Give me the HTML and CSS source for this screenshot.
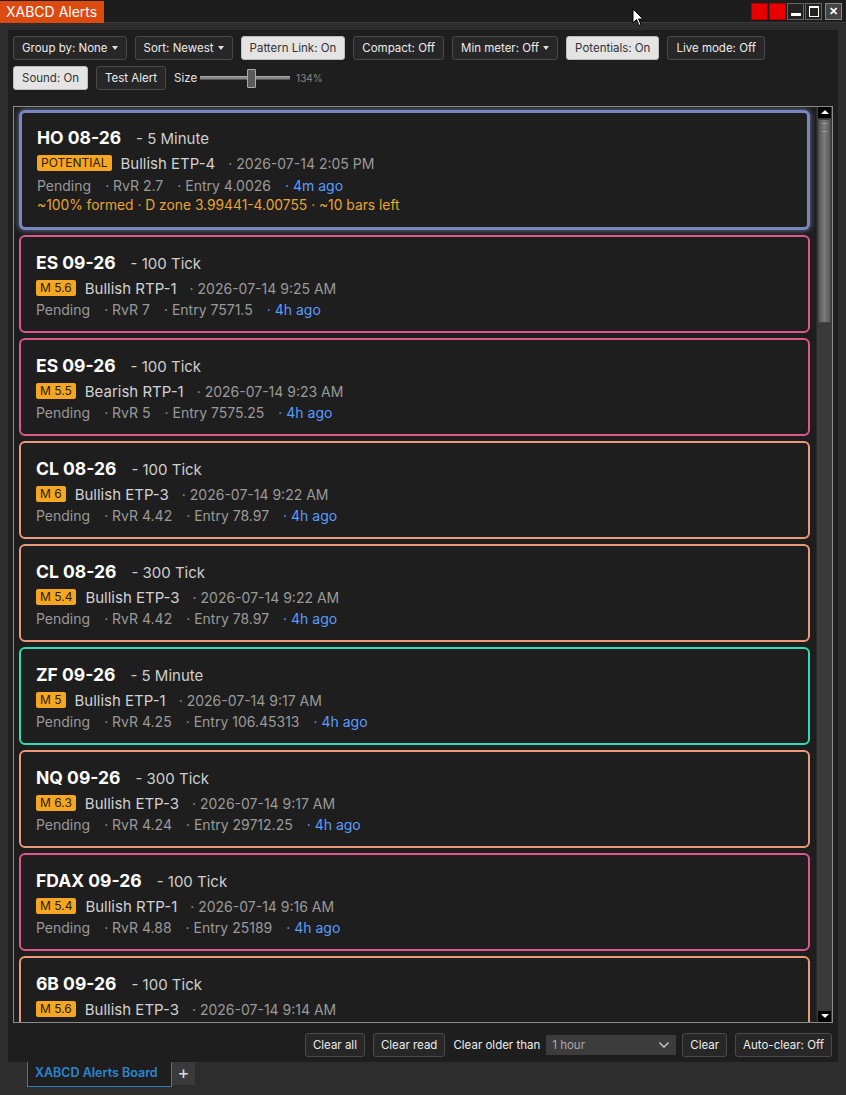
FILE: index.html
```html
<!DOCTYPE html>
<html>
<head>
<meta charset="UTF-8">
<title>XABCD Alerts</title>
<link rel="stylesheet" href="styles.css">
</head>
<body>
<div class="titlebar">
	<div class="apptab">XABCD Alerts</div>
	<div class="winbtns">
		<span class="wb red"></span><span class="wb red"></span>
		<span class="wb"><i class="min"></i></span>
		<span class="wb"><i class="max"></i></span>
		<span class="wb close">&#x2715;</span>
	</div>
	<svg class="cursor" width="12" height="19" viewBox="0 0 12 19"><path d="M1 1 L1 15 L4.5 11.5 L7 17.5 L9 16.6 L6.6 11 L11 11 Z" fill="#fff" stroke="#000" stroke-width="1"/></svg>
</div>

<div class="frame">
	<div class="panel">
		<div class="toolbar">
			<div class="row">
				<button class="btn">Group by: None<span class="caret"></span></button>
				<button class="btn">Sort: Newest<span class="caret"></span></button>
				<button class="btn on">Pattern Link: On</button>
				<button class="btn">Compact: Off</button>
				<button class="btn">Min meter: Off<span class="caret"></span></button>
				<button class="btn on">Potentials: On</button>
				<button class="btn">Live mode: Off</button>
			</div>
			<div class="row">
				<button class="btn on">Sound: On</button>
				<button class="btn">Test Alert</button>
				<span class="lbl">Size</span>
				<div class="slider"><span class="thumb"></span></div>
				<span class="pct">134%</span>
			</div>
		</div>

		<div class="list">
			<div class="cards">
				<div class="card blue sel">
					<div class="head"><b>HO 08-26</b><span class="tf">- 5 Minute</span></div>
					<div class="line2"><span class="badge">POTENTIAL</span><span class="pat">Bullish ETP-4</span><span class="dt">· 2026-07-14 2:05 PM</span></div>
					<div class="line3"><span>Pending</span><span>· RvR 2.7</span><span>· Entry 4.0026</span><span class="ago">· 4m ago</span></div>
					<div class="line4">~100% formed · D zone 3.99441-4.00755 · ~10 bars left</div>
				</div>
				<div class="card pink">
					<div class="head"><b>ES 09-26</b><span class="tf">- 100 Tick</span></div>
					<div class="line2"><span class="badge">M 5.6</span><span class="pat">Bullish RTP-1</span><span class="dt">· 2026-07-14 9:25 AM</span></div>
					<div class="line3"><span>Pending</span><span>· RvR 7</span><span>· Entry 7571.5</span><span class="ago">· 4h ago</span></div>
				</div>
				<div class="card pink">
					<div class="head"><b>ES 09-26</b><span class="tf">- 100 Tick</span></div>
					<div class="line2"><span class="badge">M 5.5</span><span class="pat">Bearish RTP-1</span><span class="dt">· 2026-07-14 9:23 AM</span></div>
					<div class="line3"><span>Pending</span><span>· RvR 5</span><span>· Entry 7575.25</span><span class="ago">· 4h ago</span></div>
				</div>
				<div class="card orange">
					<div class="head"><b>CL 08-26</b><span class="tf">- 100 Tick</span></div>
					<div class="line2"><span class="badge">M 6</span><span class="pat">Bullish ETP-3</span><span class="dt">· 2026-07-14 9:22 AM</span></div>
					<div class="line3"><span>Pending</span><span>· RvR 4.42</span><span>· Entry 78.97</span><span class="ago">· 4h ago</span></div>
				</div>
				<div class="card orange">
					<div class="head"><b>CL 08-26</b><span class="tf">- 300 Tick</span></div>
					<div class="line2"><span class="badge">M 5.4</span><span class="pat">Bullish ETP-3</span><span class="dt">· 2026-07-14 9:22 AM</span></div>
					<div class="line3"><span>Pending</span><span>· RvR 4.42</span><span>· Entry 78.97</span><span class="ago">· 4h ago</span></div>
				</div>
				<div class="card teal">
					<div class="head"><b>ZF 09-26</b><span class="tf">- 5 Minute</span></div>
					<div class="line2"><span class="badge">M 5</span><span class="pat">Bullish ETP-1</span><span class="dt">· 2026-07-14 9:17 AM</span></div>
					<div class="line3"><span>Pending</span><span>· RvR 4.25</span><span>· Entry 106.45313</span><span class="ago">· 4h ago</span></div>
				</div>
				<div class="card orange">
					<div class="head"><b>NQ 09-26</b><span class="tf">- 300 Tick</span></div>
					<div class="line2"><span class="badge">M 6.3</span><span class="pat">Bullish ETP-3</span><span class="dt">· 2026-07-14 9:17 AM</span></div>
					<div class="line3"><span>Pending</span><span>· RvR 4.24</span><span>· Entry 29712.25</span><span class="ago">· 4h ago</span></div>
				</div>
				<div class="card pink">
					<div class="head"><b>FDAX 09-26</b><span class="tf">- 100 Tick</span></div>
					<div class="line2"><span class="badge">M 5.4</span><span class="pat">Bullish RTP-1</span><span class="dt">· 2026-07-14 9:16 AM</span></div>
					<div class="line3"><span>Pending</span><span>· RvR 4.88</span><span>· Entry 25189</span><span class="ago">· 4h ago</span></div>
				</div>
				<div class="card orange">
					<div class="head"><b>6B 09-26</b><span class="tf">- 100 Tick</span></div>
					<div class="line2"><span class="badge">M 5.6</span><span class="pat">Bullish ETP-3</span><span class="dt">· 2026-07-14 9:14 AM</span></div>
				</div>
			</div>
			<div class="scrollbar">
				<span class="arrow up"></span>
				<div class="track"><span class="sthumb"></span></div>
				<span class="arrow down"></span>
			</div>
		</div>

		<div class="bottombar">
			<button class="btn">Clear all</button>
			<button class="btn">Clear read</button>
			<span class="lbl2">Clear older than</span>
			<div class="select">1 hour<svg width="12" height="8" viewBox="0 0 12 8"><path d="M1.5 1.5 L6 6 L10.5 1.5" fill="none" stroke="#bbb" stroke-width="1.6"/></svg></div>
			<button class="btn">Clear</button>
			<button class="btn">Auto-clear: Off</button>
		</div>
	</div>
	<div class="tabs">
		<div class="tab">XABCD Alerts Board</div>
		<div class="addtab">+</div>
	</div>
</div>
</body>
</html>
```

FILE: styles.css
```css
*{margin:0;padding:0;box-sizing:border-box;}
body{background:#2d2d2d;font-family:Inter,"Noto Sans",sans-serif;color:#e6e6e6;width:846px;height:1095px;overflow:hidden;}

.titlebar{height:23px;background:#1d1d1d;position:relative;display:flex;align-items:center;border-bottom:1px solid #3a3a3a;}
.apptab{background:#dc4a10;color:#fff;font-size:14px;height:22px;line-height:22px;padding:0 6px 0 6px;width:104px;margin-top:1px;}
.winbtns{margin-left:auto;display:flex;gap:1px;padding-right:4px;}
.wb{width:17px;height:17px;background:#222;border:1px solid #666;display:flex;align-items:center;justify-content:center;color:#fff;font-size:11px;font-weight:bold;}
.wb.red{background:#e80000;border-color:#a00;}
.wb.close{background:#444;border-color:#888;margin-left:2px;}
.wb .min{display:block;width:10px;height:3px;background:#fff;margin-top:6px;}
.wb .max{display:block;width:10px;height:11px;border:1px solid #fff;border-top-width:2px;}
.cursor{position:absolute;left:632px;top:8px;}

.frame{padding:7px 8px 0;}
.panel{background:#1e1e1e;height:1032px;display:flex;flex-direction:column;padding:6px 5px 0;}

.row{display:flex;align-items:center;gap:8px;height:24px;margin-bottom:6px;}
.btn{height:24px;padding:0 7px;background:#272727;border:1px solid #4a4a4a;border-radius:3px;color:#ececec;font-family:inherit;font-size:11.5px;display:inline-flex;align-items:center;white-space:nowrap;}
.toolbar .btn{padding:0 8px;}
.btn.on{background:#e4e4e4;border-color:#bdbdbd;color:#333;}
.caret{display:inline-block;margin-left:4px;border-left:3.5px solid transparent;border-right:3.5px solid transparent;border-top:4px solid #ddd;}
.lbl{font-size:11.5px;color:#e6e6e6;}
.slider{width:90px;height:4px;background:#888;border-top:1px solid #aaa;border-bottom:1px solid #555;position:relative;margin-left:-5px;}
.thumb{position:absolute;left:47px;top:-8px;width:9px;height:19px;background:#5a5a5a;border:1px solid #aaa;border-radius:1px;}
.pct{font-size:10px;color:#888;margin-left:-2px;}

.list{margin-top:10px;height:917px;border:1px solid #8a8a8a;display:flex;overflow:hidden;}
.cards{flex:1;overflow:hidden;padding:3px 6px 0 5px;}
.card{border:2px solid #888;border-radius:6px;background:#1e1e1e;padding:15px 15px 12px;margin-bottom:5px;height:98px;}
.card.sel{border-width:3px;padding:14px 15px 11px;height:120px;box-shadow:0 0 5px 1px rgba(140,150,210,0.55);margin-bottom:5px;}
.card.blue{border-color:#7a86c0;}
.card.pink{border-color:#de578b;}
.card.orange{border-color:#eb9a78;}
.card.teal{border-color:#2edcb8;}
.head{height:22px;line-height:22px;margin-bottom:4px;white-space:nowrap;}
.head b{font-size:17.5px;color:#fff;font-weight:700;}
.head .tf{font-size:15px;color:#cfcfcf;margin-left:15px;}
.line2,.line3{height:20px;display:flex;align-items:center;font-size:14px;color:#9a9a9a;white-space:nowrap;}
.line3{margin-top:1px;}
.sel .line3{margin-top:2px;}
.badge{background:#f5a623;color:#2a2000;font-size:12px;height:16px;line-height:16px;padding:0 4px;border-radius:2px;margin-right:9px;}
.pat{font-size:15px;color:#d2d2d2;margin-right:13px;}
.line3 span+span{margin-left:14px;}
.line3 .ago{color:#5b9cff;}
.line4{height:20px;line-height:20px;font-size:13.8px;color:#e8a534;white-space:nowrap;}

.scrollbar{width:16px;background:#3a3a3a;display:flex;flex-direction:column;border-left:1px solid #2a2a2a;}
.arrow{height:11px;background:#000;margin:0 1px;position:relative;display:block;}
.arrow.up::after,.arrow.down::after{content:"";position:absolute;left:3px;border-left:4px solid transparent;border-right:4px solid transparent;}
.arrow.up::after{top:3px;border-bottom:4px solid #fff;}
.arrow.down::after{top:3px;border-top:4px solid #fff;}
.track{flex:1;padding:1px 1px;}
.sthumb{display:block;height:204px;background:linear-gradient(to right,#5a5a5a,#7a7a7a 50%,#5a5a5a);border:1px solid #444;position:relative;}
.sthumb::before{content:"";position:absolute;left:3px;right:3px;top:3px;height:7px;border-top:1px solid #9a9a9a;border-bottom:1px solid #9a9a9a;}

.bottombar{display:flex;justify-content:flex-end;align-items:center;gap:8px;margin-top:10px;padding-right:1px;}
.lbl2{font-size:11.5px;color:#eee;}
.select{width:130px;height:20px;background:#3c3c3c;color:#aaa;font-size:11.5px;display:flex;align-items:center;justify-content:space-between;padding:0 6px;margin-left:-2px;margin-right:-2px;}

.tabs{display:flex;padding-left:19px;}
.tab{width:145px;height:25px;border:1px solid #2a7fc2;border-top:none;background:#1e1e1e;color:#2b86d2;font-size:12.5px;font-weight:600;line-height:22px;padding-left:7px;}
.addtab{width:23px;height:23px;background:#3a3a3a;color:#ddd;font-size:18px;text-align:center;line-height:22px;}
```
